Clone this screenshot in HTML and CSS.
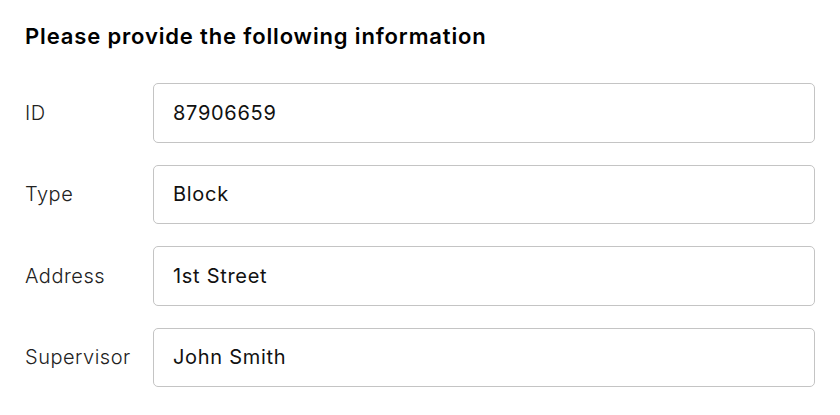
FILE: index.html
```html
<!DOCTYPE html>
<html>
<head>
<meta charset="utf-8">
<link rel="stylesheet" href="styles.css">
</head>
<body>
<div class="page">
  <h1 class="title">Please provide the following information</h1>
  <form class="form">
    <label class="label" for="f-id">ID</label>
    <input class="field" id="f-id" type="text" value="87906659">
    <label class="label" for="f-type">Type</label>
    <input class="field" id="f-type" type="text" value="Block">
    <label class="label" for="f-addr">Address</label>
    <input class="field" id="f-addr" type="text" value="1st Street">
    <label class="label" for="f-sup">Supervisor</label>
    <input class="field" id="f-sup" type="text" value="John Smith">
  </form>
</div>
</body>
</html>
```

FILE: styles.css
```css
html, body {
  margin: 0;
  padding: 0;
  background: #ffffff;
}
.page {
  padding: 22px 25px 0 25px;
  font-family: Inter, "Noto Sans", sans-serif;
  color: #111;
}
.title {
  margin: 0 0 33px 0;
  font-size: 22px;
  line-height: 28px;
  font-weight: 600;
  letter-spacing: 0.85px;
  color: #000;
}
.form {
  display: grid;
  grid-template-columns: 128px 1fr;
  grid-auto-rows: 59.5px;
  row-gap: 22px;
  align-items: center;
}
.label {
  font-size: 20px;
  font-weight: 300;
  letter-spacing: 0.5px;
  color: #222;
}
.field {
  box-sizing: border-box;
  height: 59.5px;
  width: 100%;
  border: 1px solid #c4c4c4;
  border-radius: 5px;
  padding: 0 19px;
  font-family: Inter, "Noto Sans", sans-serif;
  font-size: 20px;
  font-weight: 400;
  letter-spacing: 0.7px;
  color: #111;
  background: #fff;
  outline: none;
}
```
